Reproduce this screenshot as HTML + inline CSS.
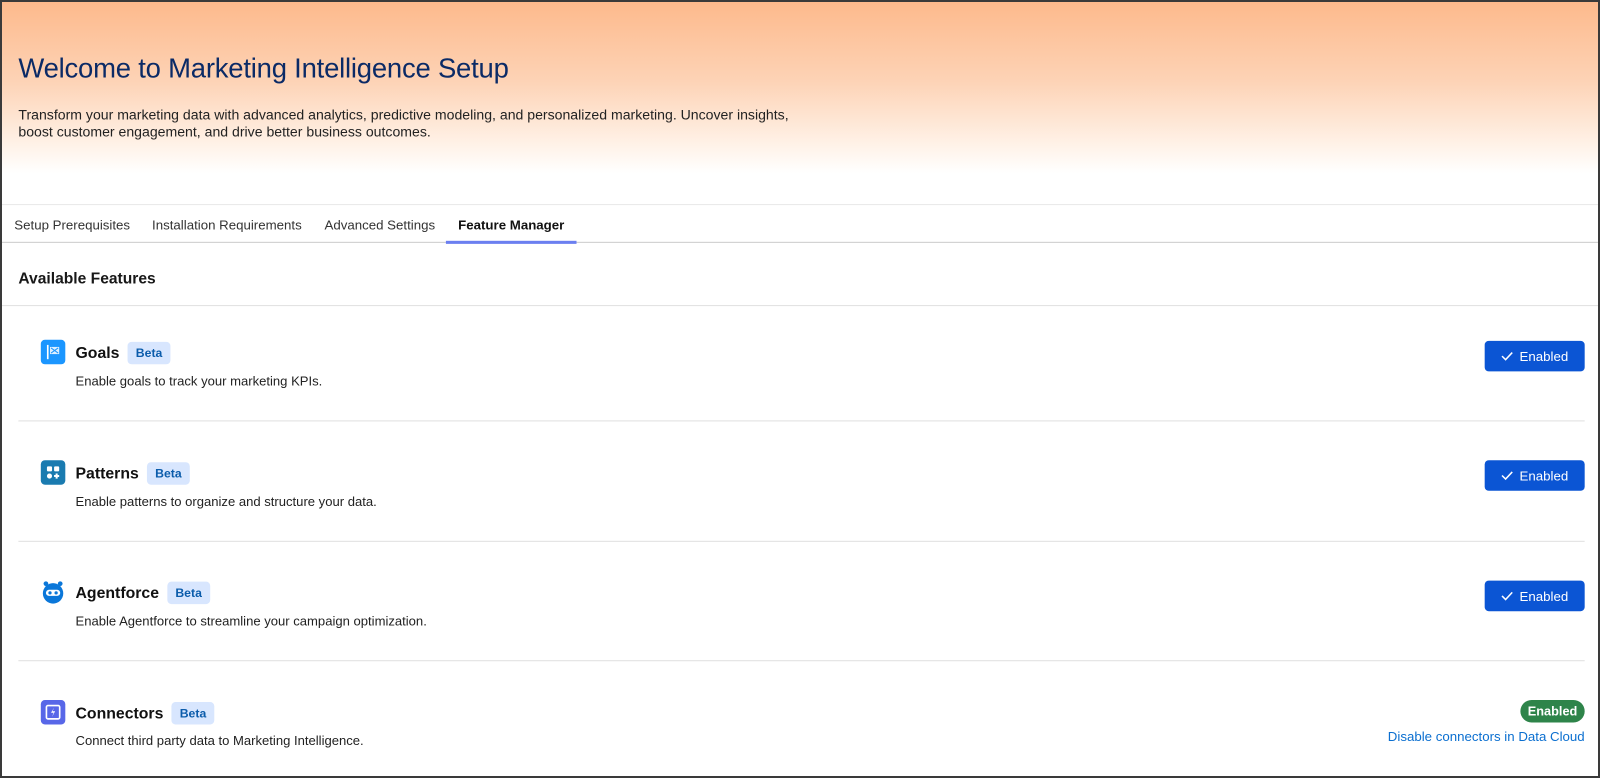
<!DOCTYPE html>
<html><head><meta charset="utf-8"><style>
*{box-sizing:border-box;margin:0;padding:0}
body{width:1600px;height:778px;overflow:hidden;background:#fff;font-family:"Liberation Sans",Arial,sans-serif;color:#181818;position:relative}
.wrap{position:absolute;left:0;top:0;width:1568px;height:763px;transform:scale(1.0204);transform-origin:0 0}
.frame{position:absolute;left:0;top:0;width:1600px;height:778px;border:2px solid #3a3a3a;pointer-events:none}
.hero{position:absolute;left:0;top:0;width:1568px;height:200px;background:linear-gradient(#fdb98b 0%,#fdd3b6 40%,#fff1e6 70%,#fff 85%)}
h1{position:absolute;left:18px;top:52px;font-size:26.9px;font-weight:400;color:#0b2a66;letter-spacing:-0.2px}
.desc{position:absolute;left:18px;top:104px;font-size:13.8px;line-height:17px;color:#222;width:770px}
.tabs{position:absolute;left:0;top:200px;width:1568px;height:38px;border-top:1px solid #e8e8e8;border-bottom:1px solid #ccc}
.tab{position:absolute;top:12px;font-size:13px;color:#333}
.tab.act{font-weight:700;color:#111}
.ul{position:absolute;left:437px;top:35px;width:128px;height:3px;background:#6b7ff0}
.avail{position:absolute;left:18px;top:265px;font-size:15.3px;font-weight:700}
.hr{position:absolute;height:1px;background:#e0e0e0}
.icon{position:absolute;left:40px;width:24px;height:24px;border-radius:4px}
.title{position:absolute;left:74px;font-size:15.5px;font-weight:700;color:#111}
.beta{display:inline-block;margin-left:8px;background:#d8e6fe;color:#0b5cab;font-size:12px;font-weight:700;padding:4px 8px;border-radius:4px;vertical-align:1px}
.sub{position:absolute;left:74px;font-size:12.8px;color:#222}
.btn{position:absolute;left:1455px;width:98px;height:30px;background:#0b55d4;border-radius:4px;color:#fff;font-size:13px;display:flex;align-items:center;justify-content:center;gap:6px}
</style></head><body>
<div class="wrap">
<div class="hero"></div>
<h1>Welcome to Marketing Intelligence Setup</h1>
<div class="desc">Transform your marketing data with advanced analytics, predictive modeling, and personalized marketing. Uncover insights,<br>boost customer engagement, and drive better business outcomes.</div>
<div class="tabs">
<span class="tab" style="left:14px">Setup Prerequisites</span>
<span class="tab" style="left:149px">Installation Requirements</span>
<span class="tab" style="left:318px">Advanced Settings</span>
<span class="tab act" style="left:449px">Feature Manager</span>
<div class="ul"></div>
</div>
<div class="avail">Available Features</div>
<div class="hr" style="left:0;top:299px;width:1568px"></div>

<div class="icon" style="top:333px;background:#1b96ff"><svg width="24" height="24"><rect x="6" y="5" width="1.6" height="14" fill="#fff"/><rect x="9" y="7" width="9" height="7" fill="#fff" opacity=".85"/><path d="M10 8l7 5M17 8l-7 5" stroke="#1b96ff" stroke-width="1"/></svg></div>
<div class="title" style="top:335px">Goals<span class="beta">Beta</span></div>
<div class="sub" style="top:366px">Enable goals to track your marketing KPIs.</div>
<div class="btn" style="top:334px"><svg width="12" height="10"><path d="M1 5l3.5 3.5L11 1.5" stroke="#fff" stroke-width="1.5" fill="none"/></svg>Enabled</div>
<div class="hr" style="left:18px;top:412px;width:1535px"></div>

<div class="icon" style="top:451px;background:#1a7bb0"><svg width="24" height="24"><rect x="6" y="6" width="5" height="5" rx="1" fill="#fff"/><rect x="13" y="6" width="5" height="5" rx="1" fill="#fff"/><circle cx="8.5" cy="15.5" r="2.5" fill="#fff"/><path d="M15.5 13v5M13 15.5h5" stroke="#fff" stroke-width="2"/></svg></div>
<div class="title" style="top:453px">Patterns<span class="beta">Beta</span></div>
<div class="sub" style="top:484px">Enable patterns to organize and structure your data.</div>
<div class="btn" style="top:451px"><svg width="12" height="10"><path d="M1 5l3.5 3.5L11 1.5" stroke="#fff" stroke-width="1.5" fill="none"/></svg>Enabled</div>
<div class="hr" style="left:18px;top:530px;width:1535px"></div>

<div class="icon" style="top:568px"><svg width="24" height="24"><circle cx="5" cy="4" r="2.3" fill="#0b77d9"/><circle cx="19" cy="4" r="2.3" fill="#0b77d9"/><circle cx="12" cy="13.5" r="10" fill="#0b77d9"/><rect x="5" y="10" width="14" height="6" rx="3" fill="#fff"/><circle cx="9" cy="13" r="1.6" fill="#0b77d9"/><circle cx="15" cy="13" r="1.6" fill="#0b77d9"/></svg></div>
<div class="title" style="top:570px">Agentforce<span class="beta">Beta</span></div>
<div class="sub" style="top:601px">Enable Agentforce to streamline your campaign optimization.</div>
<div class="btn" style="top:569px"><svg width="12" height="10"><path d="M1 5l3.5 3.5L11 1.5" stroke="#fff" stroke-width="1.5" fill="none"/></svg>Enabled</div>
<div class="hr" style="left:18px;top:647px;width:1535px"></div>

<div class="icon" style="top:686px;background:#5867e8"><svg width="24" height="24"><rect x="5.5" y="5.5" width="13" height="13" rx="1.5" fill="none" stroke="#fff" stroke-width="1.6"/><path d="M13 7.5l-3 5h2.5l-1.5 4 3-5.5h-2.5z" fill="#fff"/></svg></div>
<div class="title" style="top:688px">Connectors<span class="beta">Beta</span></div>
<div class="sub" style="top:718px">Connect third party data to Marketing Intelligence.</div>
<div style="position:absolute;left:1490px;top:686px;width:63px;height:22px;border-radius:11px;background:#2e844a;color:#fff;font-size:12.5px;font-weight:700;display:flex;align-items:center;justify-content:center">Enabled</div>
<div style="position:absolute;right:15px;top:714px;font-size:13px;color:#0b6fd0">Disable connectors in Data Cloud</div>
</div>
<div class="frame"></div>
</body></html>
